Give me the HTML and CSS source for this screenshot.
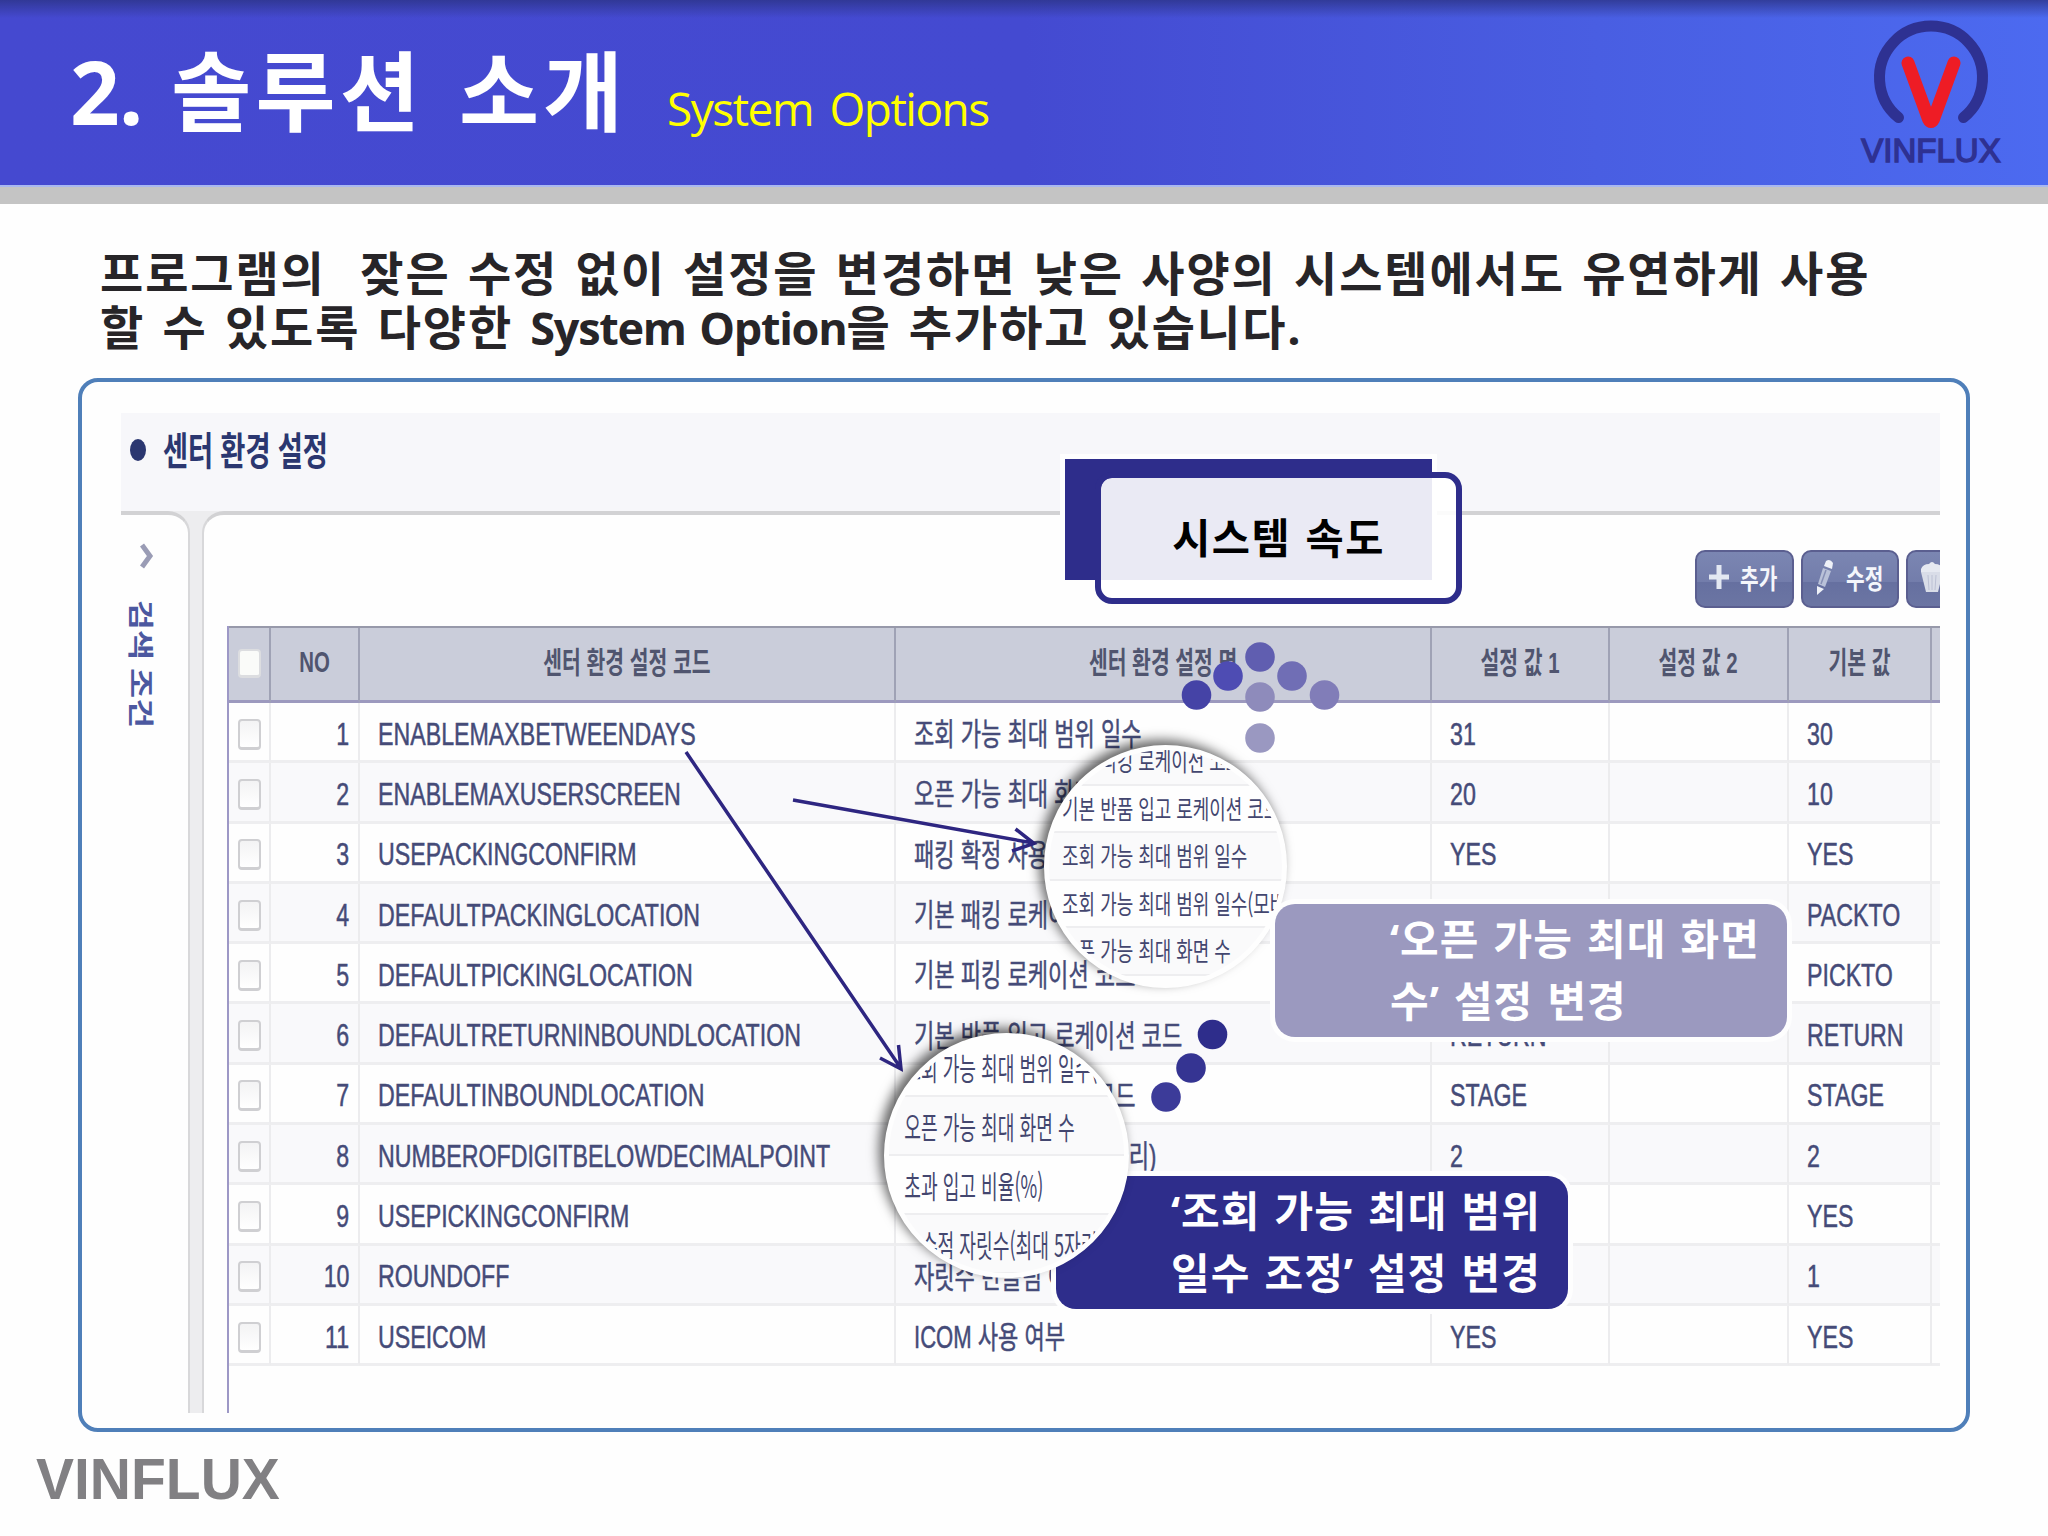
FILE: index.html
```html
<!DOCTYPE html>
<html lang="ko">
<head>
    <meta charset="UTF-8">
    <meta name="viewport" content="width=device-width, initial-scale=1.0">
    <title>VINFLUX - System Options</title>
    <link rel="stylesheet" href="styles.css">
</head>
<body>
    <div class="slide">
        <header class="header">
            <h1><span class="num">2.</span> 솔루션 소개</h1>
            <span class="subtitle">System Options</span>
            <div class="logo">
                <svg width="120" height="120" viewBox="0 0 120 120" fill="none" stroke-linecap="round" stroke-linejoin="round">
                    <path d="M27.5 104.500A51.500 51.500 0 1 1 92.500 104.500" stroke="#2e3192" stroke-width="11"/>
                    <path d="M37 50L57.500 106Q60 111 62.500 106L83 50" stroke="#ee1c25" stroke-width="13"/>
                </svg>
                <span class="logo-name">VINFLUX</span>
            </div>
        </header>

        <p class="intro">프로그램의&nbsp; 잦은 수정 없이 설정을 변경하면 낮은 사양의 시스템에서도 유연하게 사용<br>할 수 있도록 다양한 <span class="latin">System Option</span>을 추가하고 있습니다.</p>

        <main class="panel">
            <div class="screen">
                <div class="screen-title">
                    <span class="bullet"></span>
                    <h2>센터 환경 설정</h2>
                </div>
                <div class="screen-body">
                    <aside class="side">
                        <svg class="chevron" width="14" height="26" viewBox="0 0 14 26" fill="none" stroke="#9a9cb5" stroke-width="5">
                            <path d="M2 2L10 13L2 24"/>
                        </svg>
                        <span class="side-label">검색 조건</span>
                    </aside>
                    <div class="gutter"></div>
                    <section class="content">
                        <div class="toolbar">
                            <button class="tool">
                                <svg width="20" height="26" viewBox="0 0 20 26" stroke="#e3e8f2" stroke-width="5"><path d="M10 1V25M0 13H20"/></svg>
                                <span>추가</span>
                            </button>
                            <button class="tool">
                                <svg width="20" height="38" viewBox="0 0 20 38">
                                    <path d="M11 3Q15 0 18 5L17 11L9 8Z" fill="#eef1f8"/>
                                    <path d="M8 10L16 13L10 29L3 26Z" fill="#b9c1d8"/>
                                    <path d="M2 28L9 31L2 37Z" fill="#eef1f8"/>
                                    <path d="M11 12L6 26" stroke="#8790b5" stroke-width="1.500"/>
                                </svg>
                                <span>수정</span>
                            </button>
                            <button class="tool">
                                <svg width="24" height="34" viewBox="0 0 24 34">
                                    <path d="M1 9Q3 4 9 4Q12 0 15 4Q21 4 23 9V12H1Z" fill="#e6e9f1"/>
                                    <path d="M1 12H23L18 32H6Z" fill="#d9dde8"/>
                                    <path d="M8 15L9 30M12 15V30M16 15L15 30" stroke="#bcc1d4" stroke-width="1"/>
                                </svg>
                            </button>
                        </div>
                        <div class="grid">
                            <div class="row head">
                                <div><i class="check"></i></div>
                                <div><span>NO</span></div>
                                <div><span>센터 환경 설정 코드</span></div>
                                <div><span>센터 환경 설정 명</span></div>
                                <div><span>설정 값 1</span></div>
                                <div><span>설정 값 2</span></div>
                                <div><span>기본 값</span></div>
                                <div></div>
                            </div>
                            <div id="rows"></div>
                        </div>
                    </section>
                </div>
            </div>
        </main>

        <footer>VINFLUX</footer>

        <!-- callouts over the table -->
        <div class="tag-back"></div>
        <div class="tag">시스템 속도</div>

        <svg class="marks" width="2048" height="1536" viewBox="0 0 2048 1536">
            <g fill="none" stroke="#2e2681" stroke-width="3.500">
                <path d="M686 752L900 1067M880 1058L901 1069L898.500 1045"/>
                <path d="M793 800L1033 843M1015.500 829L1034 843.500L1012 851"/>
            </g>
            <circle cx="1260" cy="657" r="14.800" fill="#605eb0"/>
            <circle cx="1228" cy="676" r="14.800" fill="#4e4cb3"/>
            <circle cx="1196.500" cy="695" r="14.800" fill="#4543a6"/>
            <circle cx="1292" cy="676" r="14.800" fill="#706eb5"/>
            <circle cx="1324.500" cy="695" r="14.800" fill="#817db8"/>
            <circle cx="1260" cy="697" r="14.800" fill="#8e8bbb"/>
            <circle cx="1260" cy="738" r="14.800" fill="#9a98c1"/>
            <circle cx="1212.500" cy="1034.500" r="14.800" fill="#2e2d8b"/>
            <circle cx="1191" cy="1068" r="14.800" fill="#353492"/>
            <circle cx="1166" cy="1097" r="14.800" fill="#3c3b99"/>
        </svg>

        <div class="lens lens-top">
            <p>기본 피킹 로케이션 코드</p>
            <p>기본 반품 입고 로케이션 코드</p>
            <p>조회 가능 최대 범위 일수</p>
            <p>조회 가능 최대 범위 일수(모바일)</p>
            <p>오픈 가능 최대 화면 수</p>
        </div>
        <div class="note note-light">‘오픈 가능 최대 화면<br>수’ 설정 변경</div>

        <div class="note note-dark">‘조회 가능 최대 범위<br>일수 조정’ 설정 변경</div>
        <div class="lens lens-bottom">
            <p>조회 가능 최대 범위 일수(모바일)</p>
            <p>오픈 가능 최대 화면 수</p>
            <p>초과 입고 비율(%)</p>
            <p>소수점 자릿수(최대 5자리)</p>
        </div>
    </div>

    <script>
        const options = [
            ['ENABLEMAXBETWEENDAYS', '조회 가능 최대 범위 일수', '31', '30'],
            ['ENABLEMAXUSERSCREEN', '오픈 가능 최대 화면 수', '20', '10'],
            ['USEPACKINGCONFIRM', '패킹 확정 사용 여부', 'YES', 'YES'],
            ['DEFAULTPACKINGLOCATION', '기본 패킹 로케이션 코드', '', 'PACKTO'],
            ['DEFAULTPICKINGLOCATION', '기본 피킹 로케이션 코드', '', 'PICKTO'],
            ['DEFAULTRETURNINBOUNDLOCATION', '기본 반품 입고 로케이션 코드', 'RETURN', 'RETURN'],
            ['DEFAULTINBOUNDLOCATION', '기본 입고 로케이션 코드', 'STAGE', 'STAGE'],
            ['NUMBEROFDIGITBELOWDECIMALPOINT', '소수점 자릿수(최대 5자리)', '2', '2'],
            ['USEPICKINGCONFIRM', '', '', 'YES'],
            ['ROUNDOFF', '자릿수 반올림 여부', '', '1'],
            ['USEICOM', 'ICOM 사용 여부', 'YES', 'YES']
        ];

        document.getElementById('rows').innerHTML = options.map(([code, name, value, base], i) => `
            <div class="row">
                <div><i class="check"></i></div>
                <div class="no"><span>${i + 1}</span></div>
                <div><span>${code}</span></div>
                <div class="name"><span>${name}</span></div>
                <div><span>${value}</span></div>
                <div></div>
                <div><span>${base}</span></div>
                <div></div>
            </div>`).join('');
    </script>
</body>
</html>
```
FILE: styles.css
```css
* {
    box-sizing: border-box;
}

body {
    margin: 0;
    background: #fefefe;
    font-family: 'Open Sans', 'Noto Sans CJK KR', sans-serif;
}

h1, h2, p {
    margin: 0;
}

.slide {
    position: relative;
    width: 2048px;
    height: 1536px;
    overflow: hidden;
}

/* Header */
.header {
    display: flex;
    align-items: flex-start;
    height: 204px;
    padding-left: 70px;
    border-bottom: 17px solid #c4c4c4;
    background:
        linear-gradient(#2c3488cc, #2c348800 18px),
        linear-gradient(#0000 185px, #a9b8f0 185px),
        linear-gradient(90deg, #4549d0 0%, #444ad1 50%, #495ee2 78%, #4c6af0 100%);
}

.header h1 {
    width: 597px;
    padding-top: 26px;
    color: #fff;
    font-size: 87px;
    line-height: 130px;
    letter-spacing: 4.2px;
    word-spacing: 8px;
    white-space: nowrap;
}

.num {
    margin-right: -6px;
    letter-spacing: -1px;
}

.subtitle {
    padding-top: 77px;
    color: #ff0;
    font-size: 46px;
    line-height: 62px;
    word-spacing: 6px;
    letter-spacing: -1.5px;
}

.logo {
    display: flex;
    flex-direction: column;
    align-items: center;
    width: 140px;
    margin: 13px 47px 0 auto;
}

.logo-name {
    margin-top: -1px;
    color: #2e3192;
    font: 33px/38px 'Liberation Sans', sans-serif;
    -webkit-text-stroke: 1.5px #2e3192;
}

/* Intro text */
.intro {
    height: 174px;
    padding: 42px 0 0 100px;
    color: #272528;
    font-size: 47px;
    font-weight: bold;
    line-height: 54px;
    letter-spacing: 1.9px;
    word-spacing: 3.2px;
    white-space: nowrap;
}

.latin {
    font-size: 45px;
    letter-spacing: -1.3px;
}

/* Framed screen */
.panel {
    width: 1892px;
    height: 1054px;
    margin-left: 78px;
    padding: 31px 0 0 39px;
    border: 4px solid #4f7fb9;
    border-radius: 20px;
}

.screen {
    display: flex;
    flex-direction: column;
    width: 1819px;
    height: 1000px;
    overflow: hidden;
}

.screen-title {
    display: flex;
    flex: none;
    align-items: center;
    height: 98px;
    padding: 0 0 25px 9px;
    background: #f7f7fa;
}

.bullet {
    width: 16px;
    height: 22px;
    border-radius: 50%;
    background: #2b3770;
}

.screen-title h2 {
    margin-left: 17px;
    color: #2b3770;
    font-size: 39px;
    line-height: 50px;
    transform: scaleX(0.7);
    transform-origin: left;
}

.screen-body {
    display: flex;
    flex: 1;
    min-height: 0;
    background: #ededef;
}

.side {
    width: 69px;
    padding: 28px 0 0 8px;
    border-top: 4px solid #d2d2d4;
    border-right: 2px solid #d8d8da;
    border-radius: 0 22px 0 0;
    background: #fefefe;
}

.chevron {
    display: block;
    margin-left: 11px;
}

.side-label {
    display: block;
    width: 24px;
    margin-top: 31px;
    color: #4c58a0;
    font-size: 26px;
    font-weight: bold;
    line-height: 24px;
    writing-mode: vertical-rl;
    text-orientation: sideways;
    white-space: nowrap;
    transform: scaleY(1.25);
    transform-origin: top;
}

.gutter {
    width: 12px;
}

.content {
    flex: 1;
    min-width: 0;
    padding-left: 23px;
    border-top: 4px solid #d2d2d4;
    border-left: 2px solid #d8d8da;
    border-radius: 22px 0 0 0;
    background: #fefefe;
}

.toolbar {
    display: flex;
    gap: 7px;
    height: 111px;
    padding: 35px 0 0 1468px;
}

.tool {
    display: flex;
    flex: none;
    align-items: center;
    gap: 11px;
    width: 98.5px;
    height: 58px;
    padding: 0 0 4px 12px;
    border: 2px solid #5b5f90;
    border-radius: 10px;
    background: linear-gradient(#7b86b2, #737dab 55%, #6670a0 56%, #6b75a3);
    color: #f4f6fb;
    font: bold 27px 'Noto Sans CJK KR', sans-serif;
}

.tool svg {
    flex: none;
}

.tool span {
    white-space: nowrap;
    transform: scaleX(0.75);
    transform-origin: left;
}

/* Option table */
.grid {
    height: 800px;
    border-left: 2px solid #9d98c6;
}

.row {
    display: grid;
    grid-template-columns: 42px 89px 536px 536px 178px 179px 143px 1fr;
    height: 60.3px;
}

.row > div {
    display: flex;
    align-items: center;
    padding: 6px 0 0 18px;
    border-right: 2px solid #ececee;
    border-bottom: 3px solid #eeeef0;
    color: #454b78;
    font: 31px 'Liberation Sans', 'Noto Sans CJK KR', sans-serif;
    -webkit-text-stroke: 0.5px #454b78;
    white-space: nowrap;
}

.row > div:first-child {
    justify-content: center;
    padding: 5px 0 0;
}

.row > div:last-child {
    border-right: 0;
}

#rows .row:nth-child(even) {
    background: #f9f9fb;
}

.row span {
    transform: scaleX(0.748);
    transform-origin: left;
}

.row > .no {
    justify-content: flex-end;
    padding: 6px 9px 0 0;
}

.row .no span {
    transform-origin: right;
}

.row > .name {
    padding-top: 0;
}

.row .name span {
    transform: scaleX(0.712);
}

.row.head {
    height: 77px;
    border-top: 2px solid #9799aa;
    background: #cacdda;
}

.row.head > div {
    justify-content: center;
    padding: 0 0 9px;
    border-right-color: #9fa2b5;
    border-bottom-color: #9c99be;
    color: #50556f;
    font-size: 30px;
    font-weight: bold;
    -webkit-text-stroke: 0;
}

.row.head > div:nth-child(2) {
    padding-bottom: 5px;
}

.head span {
    transform: scaleX(0.68);
    transform-origin: center;
}

.check {
    width: 23px;
    height: 31px;
    border: 2px solid #cfcfd2;
    border-bottom-width: 3px;
    border-radius: 4px;
    background: linear-gradient(#f3f3f4, #fff);
}

.head .check {
    height: 29px;
    margin-top: 7px;
    border-color: #dcdde0;
    background: #fafbf9;
}

footer {
    padding: 10px 0 0 36px;
    color: #818083;
    font: bold 57px/74px 'Liberation Sans', sans-serif;
}

/* Callouts */
.tag-back {
    position: absolute;
    left: 1065px;
    top: 459px;
    width: 367px;
    height: 121px;
    background: #2e2d8b;
    box-shadow: 0 0 0 5px #fefefe;
}

.tag {
    position: absolute;
    left: 1095px;
    top: 472px;
    width: 367px;
    height: 132px;
    border: 6px solid #2e2d8b;
    border-radius: 17px;
    background: rgba(255, 255, 255, 0.9);
    background-clip: padding-box;
    color: #000;
    font-size: 41.5px;
    font-weight: bold;
    line-height: 120px;
    letter-spacing: 1.5px;
    word-spacing: 2px;
    text-align: center;
}

.marks {
    position: absolute;
    left: 0;
    top: 0;
}

.note {
    position: absolute;
    width: 512px;
    height: 133px;
    padding-top: 4px;
    border-radius: 20px;
    box-shadow: 0 0 0 5px #fefefe;
    color: #fff;
    font-size: 42px;
    font-weight: bold;
    line-height: 62px;
    letter-spacing: 1px;
    word-spacing: 2.3px;
    white-space: nowrap;
}

.note-light {
    left: 1275px;
    top: 904px;
    padding-left: 115px;
    background: #9b99bf;
}

.note-dark {
    left: 1056px;
    top: 1176px;
    padding-left: 115px;
    background: #2e2d8b;
}

.lens {
    position: absolute;
    overflow: hidden;
    border-radius: 50%;
    border: 5px solid #fefefe;
    background: #fefefe;
    box-shadow: -5px -5px 12px rgba(0, 0, 0, 0.6);
}

.lens p {
    width: 200%;
    border-bottom: 2px solid #eeeef0;
    color: #43466f;
    font-family: 'Noto Sans CJK KR', sans-serif;
    font-weight: 400;
    white-space: nowrap;
    transform-origin: left;
}

.lens-top {
    left: 1044px;
    top: 745px;
    width: 243px;
    height: 243px;
}

.lens-top p {
    padding-left: 19px;
    height: 47.5px;
    font-size: 26px;
    line-height: 44px;
    transform: translateY(-12px) scaleX(0.69);
}

.lens-bottom {
    left: 884px;
    top: 1033px;
    width: 245px;
    height: 245px;
}

.lens-bottom p {
    padding-left: 26px;
    height: 59px;
    font-size: 31px;
    line-height: 57px;
    transform: scaleX(0.585);
}

.lens-top p:nth-child(odd),
.lens-bottom p:nth-child(even) {
    background: #fafafb;
}
```
